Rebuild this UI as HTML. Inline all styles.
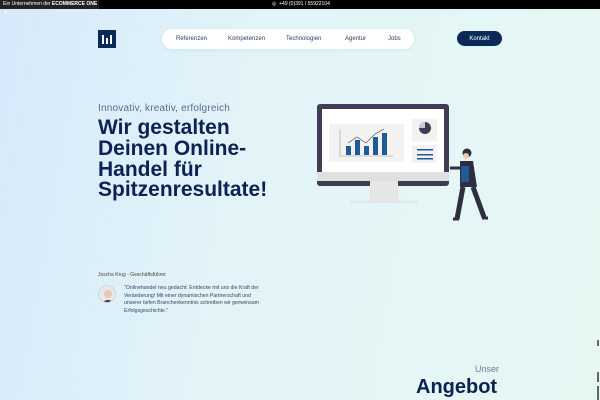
<!DOCTYPE html>
<html><head><meta charset="utf-8"><style>
*{margin:0;padding:0;box-sizing:border-box}
body{width:600px;height:400px;overflow:hidden;font-family:"Liberation Sans",sans-serif;background:linear-gradient(100deg,#d6e9fb 0%,#e2f4f8 40%,#e6f7f3 100%);position:relative}
.top{position:absolute;left:0;top:0;width:600px;height:9px;background:#000;color:#fff;font-size:5px;line-height:9px}
.top .l{position:absolute;left:0;top:0;height:9px;width:99px;background:#222;padding-left:3px}
.top .c{position:absolute;left:272px}
.logo{position:absolute;left:98px;top:30px;width:18px;height:18px;background:#0b2a5a}
.logo i{position:absolute;bottom:4px;width:2px;background:#fff}
.nav{position:absolute;left:162px;top:29px;width:252px;height:20px;background:#fff;border-radius:10px;box-shadow:0 1px 4px rgba(0,0,0,.06);font-size:6px;color:#2a3f6a}
.nav span{position:absolute;top:7px}
.btn{position:absolute;left:457px;top:31px;width:45px;height:15px;background:#0b2a5a;border-radius:8px;color:#fff;font-size:6px;display:flex;align-items:center;justify-content:center}
.sub{position:absolute;left:98px;top:103px;font-size:10px;color:#5a6d8a;letter-spacing:.2px}
h1{position:absolute;left:98px;top:118px;font-size:21px;line-height:20.8px;color:#0b2253;font-weight:bold}
.name{position:absolute;left:98px;top:272px;font-size:5px;color:#444}
.av{position:absolute;left:98px;top:285px;width:18px;height:18px;border-radius:50%;background:#e8e8ec;border:1px solid #cfd5dc;overflow:hidden}
.q{position:absolute;left:124px;top:285px;font-size:5.2px;line-height:7.7px;color:#3a4560;width:140px}
.h2a{position:absolute;left:475px;top:364px;font-size:9px;color:#6d7e96}
.h2b{position:absolute;left:416px;top:376px;font-size:20px;font-weight:bold;color:#0b2253}
.sb{position:absolute;left:597px;width:2px;background:#666}
</style></head><body>
<div class="top"><div class="l">Ein Unternehmen der <b>ECOMMERCE ONE</b> &nbsp;▾</div><div class="c">◎ &nbsp;+49 (0)391 / 55922104</div></div>
<div class="logo"><i style="left:4px;height:9px"></i><i style="left:8px;height:6px"></i><i style="left:12px;height:9px"></i></div>
<div class="nav"><span style="left:14px">Referenzen</span><span style="left:66px">Kompetenzen</span><span style="left:124px">Technologien</span><span style="left:183px">Agentur</span><span style="left:226px">Jobs</span></div>
<div class="btn">Kontakt</div>
<div class="sub">Innovativ, kreativ, erfolgreich</div>
<h1>Wir gestalten<br>Deinen Online-<br>Handel für<br>Spitzenresultate!</h1>
<svg style="position:absolute;left:300px;top:95px" width="200" height="140" viewBox="0 0 200 140">
<rect x="17" y="9" width="132" height="82" rx="3" fill="#3f3d56"/>
<rect x="22" y="14" width="122" height="63" fill="#fff"/>
<rect x="17" y="77" width="132" height="9" fill="#e0e0e0"/>
<rect x="70" y="86" width="28" height="20" fill="#e6e6e6"/>
<rect x="50" y="106" width="68" height="2" fill="#e6e6e6"/>
<rect x="29" y="29" width="75" height="38" fill="#f2f2f2"/>
<path d="M40 35 V61 H93" stroke="#999" stroke-width=".6" fill="none"/>
<rect x="46" y="51" width="5" height="9" fill="#1f5a96"/><rect x="55" y="45" width="5" height="15" fill="#1f5a96"/><rect x="64" y="51" width="5" height="9" fill="#1f5a96"/><rect x="73" y="42" width="5" height="18" fill="#1f5a96"/><rect x="82" y="38" width="5" height="22" fill="#1f5a96"/>
<path d="M48 48 L57 42 L66 48 L75 39 L84 34" stroke="#444" stroke-width=".6" fill="none"/>
<rect x="112" y="24" width="25" height="22" fill="#f2f2f2"/>
<circle cx="125" cy="33" r="6" fill="#3f3d56"/><path d="M125 33 V27 A6 6 0 0 0 119 33Z" fill="#ccc"/>
<rect x="112" y="50" width="25" height="18" fill="#f2f2f2"/>
<rect x="117" y="54" width="16" height="1.5" fill="#1f5a96"/><rect x="117" y="59" width="16" height="1.5" fill="#1f5a96"/><rect x="117" y="63" width="16" height="1.5" fill="#1f5a96"/>
<circle cx="167" cy="58" r="4.5" fill="#2f2e41"/><circle cx="166" cy="61" r="3" fill="#f0c9b5"/>
<path d="M160 66 L173 66 L177 92 L160 92Z" fill="#2f2e41"/><rect x="161" y="71" width="8" height="16" fill="#1f5a96"/>
<path d="M161 73 L150 73" stroke="#2f2e41" stroke-width="3"/>
<path d="M163 92 L157 124 M173 92 L184 122" stroke="#2f2e41" stroke-width="5"/>
<path d="M153 124 h6 M182 123 h6" stroke="#2f2e41" stroke-width="3"/>
</svg>
<div class="name">Joscha Krug - Geschäftsführer</div>
<div class="av"><svg width="18" height="18"><circle cx="9" cy="8" r="4" fill="#e9c8b0"/><path d="M2 18 Q9 10 16 18Z" fill="#333"/></svg></div>
<div class="q">"Onlinehandel neu gedacht: Entdecke mit uns die Kraft der Veränderung! Mit einer dynamischen Partnerschaft und unserer tiefen Branchenkenntnis schreiben wir gemeinsam Erfolgsgeschichte."</div>
<div class="h2a">Unser</div>
<div class="h2b">Angebot</div>
<div class="sb" style="top:340px;height:6px"></div><div class="sb" style="top:372px;height:10px"></div><div class="sb" style="top:386px;height:14px"></div>
</body></html>
